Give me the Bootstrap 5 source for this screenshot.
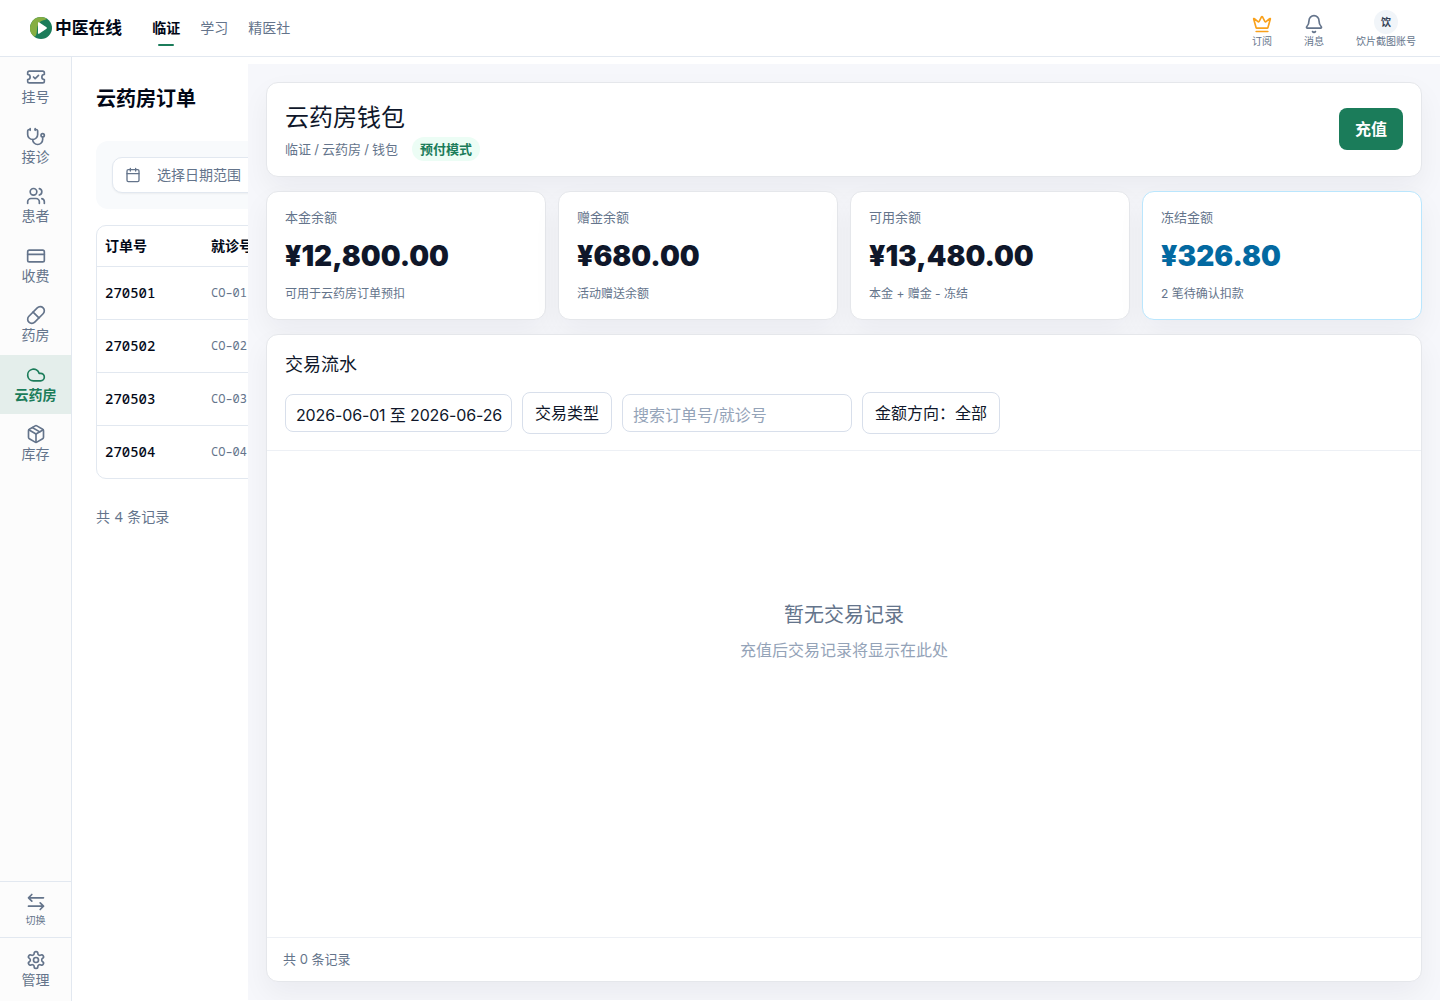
<!DOCTYPE html>
<html lang="zh-CN">
<head>
<meta charset="utf-8">
<meta name="viewport" content="width=device-width, initial-scale=1">
<title>云药房钱包</title>
<link href="https://cdn.jsdelivr.net/npm/bootstrap@5.3.0/dist/css/bootstrap.min.css" rel="stylesheet">
<style>
body{font-family:Inter,"Noto Sans CJK SC",sans-serif;color:#0f172a;font-size:14px;line-height:1.5;background:#fff;height:100vh;overflow:hidden}
svg{fill:none;stroke:currentColor;stroke-width:2;stroke-linecap:round;stroke-linejoin:round;flex:none}
.logo{stroke:none}
.topbar{height:57px;border-bottom:1px solid #e2e8f0;padding:0 24px 0 30px}
.brand-name{font-size:16.800px;font-weight:600;color:#020817;margin-left:3px;line-height:24px}
.topnav{margin-left:30px;gap:20px}
.topnav a{color:#64748b;text-decoration:none;line-height:20px;position:relative}
.topnav a.active{color:#020817;font-weight:600}
.topnav a.active::after{content:"";position:absolute;left:6px;right:6px;bottom:-8px;height:2px;border-radius:2px;background:#1b7c5a}
.tools{padding-top:2px}
.tool{font-size:10px;line-height:14px;color:#64748b}
.crown{color:#f9a11b}
.avatar{width:24px;height:24px;border-radius:50%;background:#f1f5f9;color:#334155;font-weight:600;font-size:10px}
.rail{width:72px;background:#fcfcfc;border-right:1px solid #e2e8f0;color:#64748b}
.rail-item{padding:10px 0;line-height:19.5px}
.rail-item.active{background:#e4eeeb;color:#1b7c5a;font-weight:600}
.rail-switch{border-top:1px solid #e2e8f0;border-bottom:1px solid #e2e8f0;height:57px;font-size:10px;line-height:14px;padding-top:10px;gap:1px}
.rail-manage{height:63px;padding-top:12px;line-height:19.6px}
.orders{width:176px;overflow:hidden;padding:28px 0 0 24px;font-family:"Noto Sans CJK SC",sans-serif;color:#020817}
.orders-inner{width:700px}
.orders h1{font-size:20px;font-weight:600;line-height:28px;margin:-1px 0 29px}
.filterbox{background:#f8fafc;border-radius:12px;padding:16px;margin-bottom:16px}
.datebox{height:36px;width:300px;border:1px solid #e2e8f0;border-radius:10px;background:#fff;color:#64748b;padding:0 12px;gap:16px;box-shadow:0 1px 2px rgba(0,0,0,.05)}
.datebox span{padding-bottom:2px}
.grid-wrap{border:1px solid #e2e8f0;border-radius:10px;height:254px;overflow:hidden}
.grid-row{height:53px;border-top:1px solid #e2e8f0;padding-left:8px;font-family:"Noto Sans Mono","DejaVu Sans Mono",monospace}
.grid-head{height:40px;border:0;font-weight:600;font-family:inherit;padding-bottom:2px}
.col-no{width:106px;font-weight:500;padding-bottom:2px}
.grid-head .col-no{font-weight:600;padding:0}
.visit{font-size:12px;color:#64748b}
.total{font-family:"Noto Sans","Noto Sans CJK SC",sans-serif;color:#64748b;margin-top:28px;line-height:20px;word-spacing:1px}
.wallet{margin-top:7px;height:936px;background:#f6f7fb;padding:18px;gap:14px;overflow:hidden}
.panel{background:#fff;border:1px solid #e5e7eb;border-radius:12px;box-shadow:0 12px 28px rgba(15,23,42,.05)}
.wallet-head{height:95px;padding:0 18px}
.wallet-intro{padding-top:4px}
.wallet-title{font-size:24px;line-height:30px;margin:0 0 4px}
.crumb{font-size:13px;color:#64748b;line-height:24px;gap:14px}
.crumb-path{word-spacing:-.5px}
.mode{background:#ecfdf5;color:#1b7c5a;font-weight:600;border-radius:12px;padding:0 8px}
.btn-charge,.btn-charge:hover{background:#1b7c5a;color:#fff;font-size:16px;font-weight:600;width:64px;height:42px;border-radius:8px;padding:0;border:0;margin-bottom:2px}
.stats{gap:12px}
.stat{height:129px;flex:1;padding:15px 18px 0}
.stat.frozen{border-color:#bae6fd}
.stat-name{font-size:13px;line-height:20px;color:#64748b}
.stat-num{font-size:28px;font-weight:900;line-height:34px;margin:12px 0;white-space:nowrap}
.frozen .stat-num{color:#0369a1}
.stat-note{font-size:12px;line-height:18px;color:#64748b}
.ledger-head{height:116px;padding:15px 18px 0;border-bottom:1px solid #edf0f5}
.ledger-head h2{font-size:18px;line-height:30px;margin:0 0 12px}
.filters{gap:10px}
.field{border:1px solid #d8dfeb;border-radius:8px;font-size:16px;line-height:24px;background:#fff;color:#0f172a;white-space:nowrap}
.field-in{height:38px;padding:8px 10px 0}
.field-range{width:227px;letter-spacing:-.14px}
.field-search{width:230px}
.field-btn{height:42px;padding:8px 12px}
.field.hint,.hint{color:#94a3b8}
.empty{padding-top:149px}
.empty-title{font-size:20px;line-height:30px;color:#64748b}
.empty-note{font-size:16px;line-height:24px;margin-top:8px}
.ledger-foot{height:44px;border-top:1px solid #edf0f5;padding:0 16px;font-size:13px;color:#64748b}
</style>
</head>
<body class="d-flex flex-column">
<header class="topbar d-flex align-items-center flex-shrink-0">
  <svg class="logo" width="22" height="22" viewBox="0 0 22 22"><circle cx="11" cy="11" r="11" fill="#1b7c5a"/><path d="M11 0A11 11 0 0 0 4.500 19.800C8 18 6 13 8 8S14 4 17 1.800A11 11 0 0 0 11 0Z" fill="#85ae42"/><path d="M8 5.800v10.400q0 1 1 .5l7.500-5q.9-.7 0-1.400l-7.500-5q-1-.5-1 .5Z" fill="#fff"/></svg>
  <div class="brand-name">中医在线</div>
  <nav class="topnav d-flex"><a class="active" href="#">临证</a><a href="#">学习</a><a href="#">精医社</a></nav>
  <div class="tools ms-auto d-flex">
    <div class="tool d-flex flex-column align-items-center me-4 pe-2 pt-1"><svg class="crown" width="20" height="20" viewBox="0 0 24 24"><path d="M11.562 3.266a.5.5 0 0 1 .876 0L15.390 8.870a1 1 0 0 0 1.516.294L21.183 5.500a.5.5 0 0 1 .798.519l-2.834 10.246a1 1 0 0 1-.956.734H5.810a1 1 0 0 1-.957-.734L2.020 6.020a.5.5 0 0 1 .798-.519l4.276 3.664a1 1 0 0 0 1.516-.294z"/><path d="M5 21h14"/></svg><span>订阅</span></div>
    <div class="tool d-flex flex-column align-items-center me-4 pe-2 pt-1"><svg width="20" height="20" viewBox="0 0 24 24"><path d="M10.268 21a2 2 0 0 0 3.464 0"/><path d="M3.262 15.326A1 1 0 0 0 4 17h16a1 1 0 0 0 .74-1.673C19.410 13.956 18 12.499 18 8A6 6 0 0 0 6 8c0 4.499-1.411 5.956-2.738 7.326"/></svg><span>消息</span></div>
    <div class="tool d-flex flex-column align-items-center"><span class="avatar d-flex align-items-center justify-content-center">饮</span><span>饮片截图账号</span></div>
  </div>
</header>
<div class="d-flex flex-grow-1">
  <aside class="rail d-flex flex-column flex-shrink-0 text-center">
    <div class="rail-item d-flex flex-column align-items-center"><svg width="20" height="20" viewBox="0 0 24 24"><path d="M2 9a3 3 0 1 1 0 6v2a2 2 0 0 0 2 2h16a2 2 0 0 0 2-2v-2a3 3 0 1 1 0-6V7a2 2 0 0 0-2-2H4a2 2 0 0 0-2 2Z"/><path d="m9 12 2 2 4-4"/></svg>挂号</div>
    <div class="rail-item d-flex flex-column align-items-center"><svg width="20" height="20" viewBox="0 0 24 24"><path d="M11 2v2M5 2v2"/><path d="M5 3H4a2 2 0 0 0-2 2v4a6 6 0 0 0 12 0V5a2 2 0 0 0-2-2h-1"/><path d="M8 15a6 6 0 0 0 12 0v-3"/><circle cx="20" cy="10" r="2"/></svg>接诊</div>
    <div class="rail-item d-flex flex-column align-items-center"><svg width="20" height="20" viewBox="0 0 24 24"><path d="M16 21v-2a4 4 0 0 0-4-4H6a4 4 0 0 0-4 4v2"/><circle cx="9" cy="7" r="4"/><path d="M22 21v-2a4 4 0 0 0-3-3.870"/><path d="M16 3.130a4 4 0 0 1 0 7.750"/></svg>患者</div>
    <div class="rail-item d-flex flex-column align-items-center"><svg width="20" height="20" viewBox="0 0 24 24"><rect width="20" height="14" x="2" y="5" rx="2"/><path d="M2 10h20"/></svg>收费</div>
    <div class="rail-item d-flex flex-column align-items-center"><svg width="20" height="20" viewBox="0 0 24 24"><path d="m10.500 20.500 10-10a4.950 4.950 0 1 0-7-7l-10 10a4.950 4.950 0 1 0 7 7Z"/><path d="m8.500 8.500 7 7"/></svg>药房</div>
    <div class="rail-item active d-flex flex-column align-items-center"><svg width="20" height="20" viewBox="0 0 24 24"><path d="M17.500 19H9a7 7 0 1 1 6.710-9h1.790a4.500 4.500 0 1 1 0 9Z"/></svg>云药房</div>
    <div class="rail-item d-flex flex-column align-items-center"><svg width="20" height="20" viewBox="0 0 24 24"><path d="M11 21.730a2 2 0 0 0 2 0l7-4A2 2 0 0 0 21 16V8a2 2 0 0 0-1-1.730l-7-4a2 2 0 0 0-2 0l-7 4A2 2 0 0 0 3 8v8a2 2 0 0 0 1 1.730z"/><path d="M12 22V12"/><path d="M3.290 7 12 12l8.710-5"/><path d="m7.500 4.270 9 5.150"/></svg>库存</div>
    <div class="rail-switch mt-auto d-flex flex-column align-items-center"><svg width="20" height="20" viewBox="0 0 24 24"><path d="M7 3 3 7l4 4M3 7h18M17 13l4 4-4 4M21 17H3"/></svg>切换</div>
    <div class="rail-manage d-flex flex-column align-items-center"><svg width="20" height="20" viewBox="0 0 24 24"><path d="M12.220 2h-.44a2 2 0 0 0-2 2v.18a2 2 0 0 1-1 1.730l-.43.25a2 2 0 0 1-2 0l-.15-.08a2 2 0 0 0-2.730.73l-.22.38a2 2 0 0 0 .73 2.730l.15.1a2 2 0 0 1 1 1.720v.51a2 2 0 0 1-1 1.740l-.15.09a2 2 0 0 0-.73 2.730l.22.38a2 2 0 0 0 2.730.73l.15-.08a2 2 0 0 1 2 0l.43.25a2 2 0 0 1 1 1.730V20a2 2 0 0 0 2 2h.44a2 2 0 0 0 2-2v-.18a2 2 0 0 1 1-1.730l.43-.25a2 2 0 0 1 2 0l.15.08a2 2 0 0 0 2.730-.73l.22-.39a2 2 0 0 0-.73-2.730l-.15-.08a2 2 0 0 1-1-1.740v-.5a2 2 0 0 1 1-1.740l.15-.09a2 2 0 0 0 .73-2.730l-.22-.38a2 2 0 0 0-2.730-.73l-.15.08a2 2 0 0 1-2 0l-.43-.25a2 2 0 0 1-1-1.730V4a2 2 0 0 0-2-2z"/><circle cx="12" cy="12" r="3"/></svg>管理</div>
  </aside>
  <section class="orders flex-shrink-0">
    <div class="orders-inner">
      <h1>云药房订单</h1>
      <div class="filterbox"><div class="datebox d-flex align-items-center"><svg width="16" height="16" viewBox="0 0 24 24"><path d="M8 2v4M16 2v4"/><rect width="18" height="18" x="3" y="4" rx="2"/><path d="M3 10h18"/></svg><span>选择日期范围</span></div></div>
      <div class="grid-wrap">
        <div class="grid-row grid-head d-flex align-items-center"><span class="col-no">订单号</span><span>就诊号</span></div>
        <div class="grid-row d-flex align-items-center"><span class="col-no">270501</span><span class="visit">CO–01</span></div>
        <div class="grid-row d-flex align-items-center"><span class="col-no">270502</span><span class="visit">CO–02</span></div>
        <div class="grid-row d-flex align-items-center"><span class="col-no">270503</span><span class="visit">CO–03</span></div>
        <div class="grid-row d-flex align-items-center"><span class="col-no">270504</span><span class="visit">CO–04</span></div>
      </div>
      <div class="total">共 4 条记录</div>
    </div>
  </section>
  <main class="wallet d-flex flex-column flex-grow-1">
    <div class="panel wallet-head d-flex align-items-center justify-content-between">
      <div class="wallet-intro"><h1 class="wallet-title fw-normal">云药房钱包</h1><div class="crumb d-flex"><span class="crumb-path">临证 / 云药房 / 钱包</span><span class="mode">预付模式</span></div></div>
      <button class="btn btn-charge">充值</button>
    </div>
    <div class="stats d-flex">
      <div class="panel stat"><div class="stat-name">本金余额</div><div class="stat-num">¥12,800.00</div><div class="stat-note">可用于云药房订单预扣</div></div>
      <div class="panel stat"><div class="stat-name">赠金余额</div><div class="stat-num">¥680.00</div><div class="stat-note">活动赠送余额</div></div>
      <div class="panel stat"><div class="stat-name">可用余额</div><div class="stat-num">¥13,480.00</div><div class="stat-note">本金 + 赠金 - 冻结</div></div>
      <div class="panel stat frozen"><div class="stat-name">冻结金额</div><div class="stat-num">¥326.80</div><div class="stat-note">2 笔待确认扣款</div></div>
    </div>
    <div class="panel d-flex flex-column flex-grow-1">
      <div class="ledger-head">
        <h2 class="fw-normal">交易流水</h2>
        <div class="filters d-flex align-items-center">
          <div class="field field-in field-range">2026-06-01 至 2026-06-26</div>
          <div class="field field-btn">交易类型</div>
          <div class="field field-in field-search hint">搜索订单号/就诊号</div>
          <div class="field field-btn">金额方向：全部</div>
        </div>
      </div>
      <div class="empty flex-grow-1 text-center">
        <div class="empty-title">暂无交易记录</div>
        <div class="empty-note hint">充值后交易记录将显示在此处</div>
      </div>
      <div class="ledger-foot d-flex align-items-center">共 0 条记录</div>
    </div>
  </main>
</div>
<script src="https://cdn.jsdelivr.net/npm/bootstrap@5.3.0/dist/js/bootstrap.bundle.min.js"></script>
</body>
</html>
